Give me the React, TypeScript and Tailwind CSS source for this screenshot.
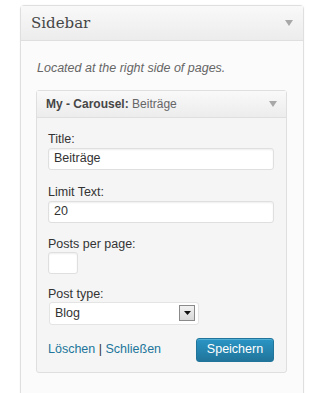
export default function App() {
  return (
    <div className="min-h-[393px] bg-white pt-[5px] pl-[20px] font-['Liberation_Sans',Arial,sans-serif]">
      <div className="w-[284px] h-[400px] rounded-t-[4px] border border-[#dfdfdf] bg-[#fbfbfb] shadow-[0_0_2px_rgba(0,0,0,0.05)]">
        {/* sidebar header */}
        <div className="flex h-[35px] items-center justify-between border-b border-[#dfdfdf] bg-gradient-to-b from-[#f9f9f9] to-[#ececec] pl-[10px] pr-[10px]">
          <span className="font-['DejaVu_Serif',Georgia,serif] text-[15px] text-[#464646]">Sidebar</span>
          <Arrow color="#a8a8a8" />
        </div>

        <p className="pl-[16px] pt-[18px] text-[12.5px] italic text-[#666]">Located at the right side of pages.</p>

        {/* widget */}
        <div className="ml-[15px] mt-[12px] w-[251px] rounded-[3px] border border-[#dfdfdf] bg-[#f5f5f5]">
          <div className="flex h-[27px] items-center justify-between border-b border-[#dfdfdf] bg-gradient-to-b from-[#f9f9f9] to-[#ececec] pl-[9px] pr-[9px]">
            <span className="text-[12px] text-[#464646]">
              <b className="font-bold">My - Carousel:</b> <span className="text-[#666]">Beiträge</span>
            </span>
            <Arrow color="#a8a8a8" />
          </div>

          <div className="pl-[11px] pr-[12px] pt-[13px] pb-[10px] text-[12.5px] text-[#333]">
            <label className="block leading-[17px]">Title:</label>
            <div className="flex h-[22px] items-center rounded-[3px] border border-[#dfdfdf] bg-white px-[5px] shadow-[inset_0_1px_2px_rgba(0,0,0,0.07)]">
              Beiträge
            </div>

            <label className="mt-[14px] block leading-[17px]">Limit Text:</label>
            <div className="flex h-[22px] items-center rounded-[3px] border border-[#dfdfdf] bg-white px-[5px] shadow-[inset_0_1px_2px_rgba(0,0,0,0.07)]">
              20
            </div>

            <label className="mt-[13px] block leading-[16px]">Posts per page:</label>
            <div className="h-[22px] w-[30px] rounded-[3px] border border-[#dfdfdf] bg-white shadow-[inset_0_1px_2px_rgba(0,0,0,0.07)]" />

            <label className="mt-[12px] block leading-[16px]">Post type:</label>
            <div className="ml-[1px] flex h-[23px] w-[150px] items-center justify-between rounded-[3px] border border-[#e4e4e4] bg-white pl-[5px] pr-[3px]">
              <span>Blog</span>
              <span className="flex h-[16px] w-[16px] items-center justify-center border border-[#8a8a8a] bg-gradient-to-b from-[#f2f2f2] to-[#d8d8d8]">
                <svg width="7" height="4" viewBox="0 0 7 4">
                  <path d="M0 0h7L3.5 4z" fill="#111" />
                </svg>
              </span>
            </div>

            <div className="mt-[13px] flex items-center justify-between">
              <span className="text-[12.5px] text-[#21759b]">
                Löschen <span className="text-[#333]">|</span> Schließen
              </span>
              <button className="h-[24px] w-[78px] rounded-[3px] border border-[#21759b] bg-gradient-to-b from-[#2a95c5] to-[#21759b] text-[12.5px] text-white shadow-[inset_0_1px_0_rgba(120,200,230,0.5)]">
                Speichern
              </button>
            </div>
          </div>
        </div>
      </div>
    </div>
  );
}

function Arrow({ color }: { color: string }) {
  return (
    <svg width="8" height="6" viewBox="0 0 8 6">
      <path d="M0 0h8L4 6z" fill={color} />
    </svg>
  );
}
